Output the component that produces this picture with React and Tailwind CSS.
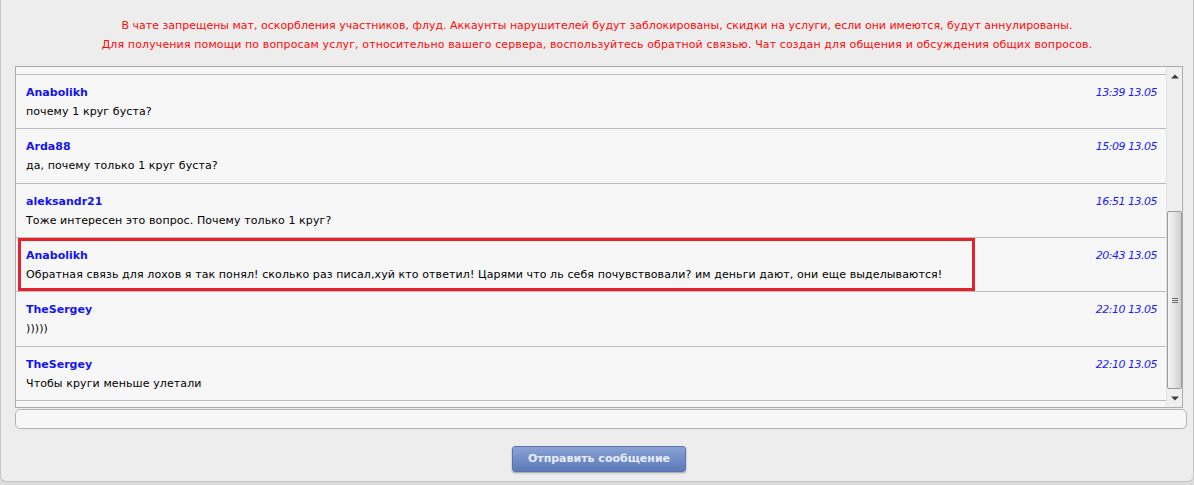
import React from "react";

const messages = [
  { name: "Anabolikh", text: "почему 1 круг буста?", time: "13:39 13.05", h: "h-[54px]" },
  { name: "Arda88", text: "да, почему только 1 круг буста?", time: "15:09 13.05", h: "h-[55px]" },
  { name: "aleksandr21", text: "Тоже интересен это вопрос. Почему только 1 круг?", time: "16:51 13.05", h: "h-[54px]" },
  {
    name: "Anabolikh",
    text: "Обратная связь для лохов я так понял! сколько раз писал,хуй кто ответил! Царями что ль себя почувствовали? им деньги дают, они еще выделываются!",
    time: "20:43 13.05",
    h: "h-[54px]",
    hl: true,
  },
  { name: "TheSergey", text: ")))))", time: "22:10 13.05", h: "h-[55px]" },
  { name: "TheSergey", text: "Чтобы круги меньше улетали", time: "22:10 13.05", h: "h-[54px]" },
];

const font = { fontFamily: '"DejaVu Sans", Verdana, sans-serif' };

function Message({ m }) {
  const body = (
    <>
      <div className="text-[11px] leading-[19px] font-bold text-[#1414f0]">{m.name}</div>
      <div className="text-[11px] leading-[19px] tracking-[0.1px] text-black">{m.text}</div>
    </>
  );
  return (
    <div className={`${m.h} border-b border-[#bcbcbc] flex shrink-0`}>
      {m.hl ? (
        <div className="ml-[2px] w-[957px] h-full border-[3px] border-[#e8202a] pl-[5px] pt-[5px]">{body}</div>
      ) : (
        <div className="pl-[10px] pt-[8px]">{body}</div>
      )}
      <div className="ml-auto pr-[9px] pt-[8px] text-[11px] leading-[19px] italic tracking-[-0.5px] text-[#1a1aff]">
        {m.time}
      </div>
    </div>
  );
}

function Scrollbar() {
  return (
    <div className="w-[16px] shrink-0 bg-[#efefef] border-l border-[#e2e2e2] flex flex-col items-center">
      <div className="h-[16px] w-full flex items-center justify-center pt-[2px]">
        <svg width="8" height="5" viewBox="0 0 8 5">
          <path d="M0 4.5 L4 0.5 L8 4.5 Z" fill="#3c3c3c" />
        </svg>
      </div>
      <div className="mt-[128px] w-[15px] h-[178px] rounded-[2px] border border-[#9c9c9c] bg-gradient-to-r from-[#f4f4f4] via-[#e6e6e6] to-[#cfcfcf] flex items-center justify-center">
        <div className="flex flex-col gap-[1px]">
          <div className="w-[6px] h-[1px] bg-[#6a6a6a]" />
          <div className="w-[6px] h-[1px] bg-[#6a6a6a]" />
          <div className="w-[6px] h-[1px] bg-[#6a6a6a]" />
        </div>
      </div>
      <div className="mt-auto h-[16px] w-full flex items-center justify-center pb-[2px]">
        <svg width="8" height="5" viewBox="0 0 8 5">
          <path d="M0 0.5 L4 4.5 L8 0.5 Z" fill="#3c3c3c" />
        </svg>
      </div>
    </div>
  );
}

export default function App() {
  return (
    <div className="w-[1194px] h-[485px] bg-[#dcdcdc] overflow-hidden" style={font}>
      <div className="h-[482px] bg-[#ededed] rounded-b-[6px] border-b border-x border-[#c4c4c4] pt-[16px]">
        <div className="text-center text-[11px] leading-[19px] text-[#ff0a0a]">
          <div>
            В чате запрещены мат, оскорбления участников, флуд. Аккаунты нарушителей будут заблокированы, скидки на услуги, если они имеются, будут аннулированы.
          </div>
          <div className="tracking-[0.12px]">
            Для получения помощи по вопросам услуг, относительно вашего сервера, воспользуйтесь обратной связью. Чат создан для общения и обсуждения общих вопросов.
          </div>
        </div>
        <div className="ml-[14px] mt-[12px] w-[1168px] h-[342px] border border-[#ababab] bg-[#f7f7f7] flex">
          <div className="flex-1 flex flex-col overflow-hidden">
            <div className="h-[8px] shrink-0 border-b border-[#bcbcbc]" />
            {messages.map((m, i) => (
              <Message key={i} m={m} />
            ))}
          </div>
          <Scrollbar />
        </div>
        <div className="ml-[14px] mt-[1px] w-[1172px] h-[20px] rounded-[5px] border border-[#b3b3b3] bg-[#f7f7f7]" />
        <div className="flex justify-center mt-[17px] pl-[4px]">
          <button className="w-[174px] h-[26px] rounded-[3px] bg-gradient-to-b from-[#8aa3d6] to-[#5c79b9] border border-[#5a74ad] shadow-[0_1px_2px_rgba(0,0,0,0.35)] text-[11px] font-bold text-[#e6ecf7]" style={font}>
            Отправить сообщение
          </button>
        </div>
      </div>
    </div>
  );
}
